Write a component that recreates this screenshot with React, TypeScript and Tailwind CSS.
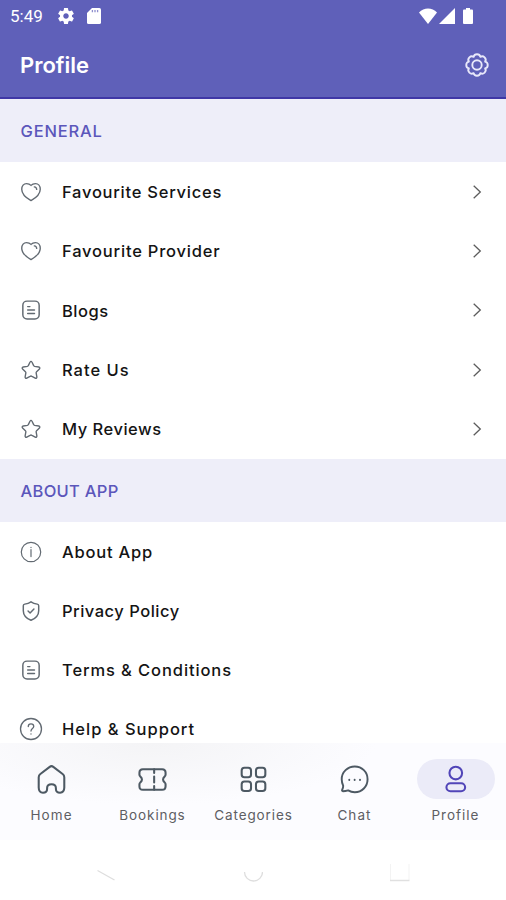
import React from 'react';
import { clsx } from 'clsx';

type IconProps = { className?: string };

interface MenuItem {
  label: string;
  icon: React.FC<IconProps>;
  tracking: string;
}

interface NavItem extends MenuItem {
  active?: boolean;
}

const Stroke: React.FC<IconProps & { width?: number; children: React.ReactNode }> = ({
  className,
  width = 1.4,
  children
}) => (
  <svg
    viewBox="0 0 24 24"
    fill="none"
    stroke="currentColor"
    strokeWidth={width}
    strokeLinecap="round"
    strokeLinejoin="round"
    className={clsx('shrink-0', className)}
  >
    {children}
  </svg>
);

const HeartIcon: React.FC<IconProps> = ({ className }) => (
  <Stroke className={className} width={1.5}>
    <path d="M12 21.3C8.2 19.2 1.9 14.6 1.9 8.9C1.9 5.4 4.1 2.8 7.1 2.8C9.3 2.8 10.9 3.6 12 4.8C13.1 3.6 14.7 2.8 16.9 2.8C19.9 2.8 22.1 5.4 22.1 8.9C22.1 14.6 15.8 19.2 12 21.3Z" />
    <path d="M15.6 6.4C17.1 6.6 18.1 7.6 18.2 9.2" />
  </Stroke>
);

const DocumentIcon: React.FC<IconProps> = ({ className }) => (
  <Stroke className={className} width={1.6}>
    <rect x="3.1" y="2.3" width="17.8" height="19.6" rx="4.6" />
    <path d="M8.4 8.3H10.8M8.4 12.1H15.8M8.4 15.9H15.8" />
  </Stroke>
);

const StarIcon: React.FC<IconProps> = ({ className }) => (
  <Stroke className={className} width={1.5}>
    <path d="M11 3.3C11.4 2.4 12.6 2.4 13 3.3L14.9 7.2C15.1 7.7 15.4 8 15.9 8.1L20.5 8.7C21.6 8.9 22 10 21.2 10.8L18.1 13.8C17.7 14.2 17.5 14.7 17.6 15.2L18.4 19.5C18.6 20.7 17.6 21.4 16.6 20.8L13 18.9C12.4 18.5 11.6 18.5 11 18.9L7.4 20.8C6.4 21.4 5.4 20.7 5.6 19.5L6.4 15.2C6.5 14.7 6.3 14.2 5.9 13.8L2.8 10.8C2 10 2.4 8.9 3.5 8.7L8.1 8.1C8.6 8 8.9 7.7 9.1 7.2Z" />
  </Stroke>
);

const InfoIcon: React.FC<IconProps> = ({ className }) => (
  <Stroke className={className} width={1.3}>
    <circle cx="12" cy="12" r="10.6" />
    <path d="M12 9.4V17M12 6.8V7.2" />
  </Stroke>
);

const ShieldIcon: React.FC<IconProps> = ({ className }) => (
  <Stroke className={className} width={1.6}>
    <path d="M12 2C14.2 3.5 16.7 4.2 18.8 4.5C19.8 4.7 20.4 5.3 20.4 6.3V11.6C20.4 16.8 16.8 20.1 12 22.1C7.2 20.1 3.6 16.8 3.6 11.6V6.3C3.6 5.3 4.2 4.7 5.2 4.5C7.3 4.2 9.8 3.5 12 2Z" />
    <path d="M8.8 12.1L11 14.2L15.2 9.9" />
  </Stroke>
);

const HelpIcon: React.FC<IconProps> = ({ className }) => (
  <Stroke className={clsx(className, 'scale-110')} width={1.3}>
    <circle cx="12" cy="12" r="10.4" />
    <path d="M9.3 9.6C9.3 8 10.4 7 12 7C13.6 7 14.7 8 14.7 9.5C14.7 11.5 12 11.7 12 14M12 16.8V17" />
  </Stroke>
);

const HomeIcon: React.FC<IconProps> = ({ className }) => (
  <Stroke className={className} width={1.5}>
    <path d="M2.7 10.4C2.7 9.4 3.1 8.6 3.9 8L10.7 2.8C11.5 2.2 12.5 2.2 13.3 2.8L20.1 8C20.9 8.6 21.3 9.4 21.3 10.4V17.9C21.3 20.4 20.2 21.6 18.2 21.6C16.2 21.6 15.2 20.6 15.2 18.9V18.1C15.2 16.4 14 15.4 12 15.4C10 15.4 8.8 16.4 8.8 18.1V18.9C8.8 20.6 7.8 21.6 5.8 21.6C3.8 21.6 2.7 20.4 2.7 17.9Z" />
  </Stroke>
);

const TicketIcon: React.FC<IconProps> = ({ className }) => (
  <Stroke className={className} width={1.5}>
    <path d="M5 4.5H19C20.8 4.5 21.5 5.5 21.5 7.1V8.6C21.5 9.2 21.2 9.5 20.8 9.9C19.3 11.1 19.3 12.9 20.8 14.1C21.2 14.5 21.5 14.8 21.5 15.4V16.9C21.5 18.5 20.8 19.5 19 19.5H5C3.2 19.5 2.5 18.5 2.5 16.9V15.4C2.5 14.8 2.8 14.5 3.2 14.1C4.7 12.9 4.7 11.1 3.2 9.9C2.8 9.5 2.5 9.2 2.5 8.6V7.1C2.5 5.5 3.2 4.5 5 4.5Z" />
    <path d="M13.2 4.6V7.3M13.2 9.8V14.2M13.2 16.7V19.4" />
  </Stroke>
);

const GridIcon: React.FC<IconProps> = ({ className }) => (
  <Stroke className={className} width={1.5}>
    <rect x="3.4" y="3.5" width="6.8" height="6.8" rx="2" />
    <rect x="13.8" y="3.5" width="6.8" height="6.8" rx="2" />
    <rect x="3.4" y="13.5" width="6.8" height="6.8" rx="2" />
    <rect x="13.8" y="13.5" width="6.8" height="6.8" rx="2" />
  </Stroke>
);

const ChatIcon: React.FC<IconProps> = ({ className }) => (
  <Stroke className={className} width={1.4}>
    <path d="M12.2 2.5C17.4 2.5 21.5 6.6 21.5 11.8C21.5 17.1 17.4 21.3 12.2 21.3C10.3 21.3 8.8 20.8 7.4 19.9C6 20.3 4.9 20.5 3.6 20.5C3 20.5 2.8 20.1 3 19.6C3.5 18.6 3.8 17.6 3.8 16.6C3.1 15.1 2.7 13.5 2.7 11.8C2.7 6.6 7 2.5 12.2 2.5Z" />
    <path d="M8.2 12.2V12.3M12.1 12.2V12.3M16 12.2V12.3" />
  </Stroke>
);

const UserIcon: React.FC<IconProps> = ({ className }) => (
  <Stroke className={className} width={1.5}>
    <circle cx="12.2" cy="7.3" r="4.6" />
    <rect x="5.4" y="14.7" width="13.6" height="5.9" rx="2.95" />
  </Stroke>
);

const GearIcon: React.FC<IconProps> = ({ className }) => (
  <Stroke className={className} width={1.9}>
    <circle cx="12" cy="12" r="4.7" />
    <path d="M8.63 3.87C9.3 0.4 14.7 0.4 15.37 3.87C18.3 1.9 22.1 5.7 20.13 8.63C23.6 9.3 23.6 14.7 20.13 15.37C22.1 18.3 18.3 22.1 15.37 20.13C14.7 23.6 9.3 23.6 8.63 20.13C5.7 22.1 1.9 18.3 3.87 15.37C0.4 14.7 0.4 9.3 3.87 8.63C1.9 5.7 5.7 1.9 8.63 3.87Z" />
  </Stroke>
);

const general: MenuItem[] = [
  { label: 'Favourite Services', icon: HeartIcon, tracking: 'tracking-[0.75px]' },
  { label: 'Favourite Provider', icon: HeartIcon, tracking: 'tracking-[0.8px]' },
  { label: 'Blogs', icon: DocumentIcon, tracking: 'tracking-[0.5px]' },
  { label: 'Rate Us', icon: StarIcon, tracking: 'tracking-[1px]' },
  { label: 'My Reviews', icon: StarIcon, tracking: 'tracking-[0.5px]' }
];

const about: MenuItem[] = [
  { label: 'About App', icon: InfoIcon, tracking: 'tracking-[0.8px]' },
  { label: 'Privacy Policy', icon: ShieldIcon, tracking: 'tracking-[0.5px]' },
  { label: 'Terms & Conditions', icon: DocumentIcon, tracking: 'tracking-[0.9px]' },
  { label: 'Help & Support', icon: HelpIcon, tracking: 'tracking-[1px]' }
];

const navItems: NavItem[] = [
  { label: 'Home', icon: HomeIcon, tracking: 'tracking-[1.1px]' },
  { label: 'Bookings', icon: TicketIcon, tracking: 'tracking-[0.9px]' },
  { label: 'Categories', icon: GridIcon, tracking: 'tracking-[0.9px]' },
  { label: 'Chat', icon: ChatIcon, tracking: 'tracking-[1.1px]' },
  { label: 'Profile', icon: UserIcon, tracking: 'tracking-[1px]', active: true }
];

const StatusBar = () => (
  <div className="flex h-8 items-center pl-2.5 pr-[33px] text-white">
    <span className="font-[Roboto,sans-serif] text-[17px] leading-8">5:49</span>
    <svg viewBox="0 0 24 24" fill="currentColor" className="ml-[13px] h-5 w-5">
      <path d="M19.14 12.94c.04-.3.06-.61.06-.94 0-.32-.02-.64-.07-.94l2.03-1.58a.49.49 0 0 0 .12-.61l-1.92-3.32a.488.488 0 0 0-.59-.22l-2.39.96c-.5-.38-1.03-.7-1.62-.94l-.36-2.54a.484.484 0 0 0-.48-.41h-3.84c-.24 0-.43.17-.47.41l-.36 2.54c-.59.24-1.13.57-1.62.94l-2.39-.96c-.22-.08-.47 0-.59.22L2.74 8.87c-.12.21-.08.47.12.61l2.03 1.58c-.05.3-.09.63-.09.94s.02.64.07.94l-2.03 1.58a.49.49 0 0 0-.12.61l1.92 3.32c.12.22.37.29.59.22l2.39-.96c.5.38 1.03.7 1.62.94l.36 2.54c.05.24.24.41.48.41h3.84c.24 0 .44-.17.47-.41l.36-2.54c.59-.24 1.13-.56 1.62-.94l2.39.96c.22.08.47 0 .59-.22l1.92-3.32c.12-.22.07-.47-.12-.61l-2.01-1.58zM12 15.3c-1.8 0-3.3-1.5-3.3-3.3s1.5-3.3 3.3-3.3 3.3 1.5 3.3 3.3-1.5 3.3-3.3 3.3z" />
    </svg>
    <svg viewBox="0 0 14 16" fill="currentColor" className="ml-[11px] h-4 w-3.5">
      <path d="M5 0H12.4Q14 0 14 1.6V14.4Q14 16 12.4 16H1.6Q0 16 0 14.4V5Z" />
      <path d="M5.4 2V4.2M8 2V4.2M10.6 2V4.2" stroke="#5f60b9" strokeOpacity="0.7" strokeWidth="1.3" />
    </svg>
    <div className="ml-auto flex items-center">
      <svg viewBox="0 0 18 16" fill="currentColor" className="h-4 w-[18px]">
        <path d="M9 16L0 4.6C5 -1 13 -1 18 4.6Z" />
      </svg>
      <svg viewBox="0 0 16 16" fill="currentColor" className="ml-0.5 h-4 w-4">
        <path d="M16 0V16H0Z" />
      </svg>
      <svg viewBox="0 0 10 16" fill="currentColor" className="ml-2 h-4 w-2.5">
        <path d="M3 0H7V1.5H9Q10 1.5 10 2.7V15Q10 16 9 16H1Q0 16 0 15V2.7Q0 1.5 1 1.5H3Z" />
      </svg>
    </div>
  </div>
);

const SectionTitle: React.FC<{ title: string; className?: string }> = ({ title, className }) => (
  <h2
    className={clsx(
      'flex h-[63px] items-center bg-[#eeeef9] pl-[20.5px] pt-px text-[16.5px] font-medium text-[#5b56bb]',
      className
    )}
  >
    {title}
  </h2>
);

const MenuRow: React.FC<{ item: MenuItem; chevron?: boolean }> = ({ item, chevron }) => {
  const Icon = item.icon;

  return (
    <li className="flex h-[59.2px] items-center pl-5 pr-[23px]">
      <Icon className="h-[22px] w-[22px] text-[#626a72]" />
      <span className={clsx('ml-5 pt-px text-[16.5px] font-medium text-[#141414]', item.tracking)}>
        {item.label}
      </span>
      {chevron && (
        <svg
          viewBox="0 0 12 16"
          fill="none"
          stroke="#5c5c5c"
          strokeWidth="1.3"
          className="ml-auto h-4 w-3"
        >
          <path d="M2.7 1.8L9.3 8L2.7 14.2" />
        </svg>
      )}
    </li>
  );
};

const BottomNav = () => (
  <nav className="flex h-[97px] bg-[#fcfcff] bg-radial-[at_30%_0%] from-[#f4f4f6] to-[#fcfcff] to-45% pt-4 pl-px">
    {navItems.map(({ label, icon: Icon, tracking, active }) => (
      <a key={label} className="flex flex-1 flex-col items-center">
        <span
          className={clsx(
            'flex h-10 w-[78px] items-center justify-center rounded-full',
            active ? 'bg-[#ebebf8] text-[#5145b8]' : 'text-[#4d5963]'
          )}
        >
          <Icon className="h-[33px] w-[33px]" />
        </span>
        <span className={clsx('mt-1.5 text-[13.5px] leading-5 text-[#5e5e63]', tracking)}>
          {label}
        </span>
      </a>
    ))}
  </nav>
);

const SystemNav = () => (
  <div className="flex h-[60px] items-center justify-between bg-white px-24 pt-1.5">
    <svg viewBox="0 0 20 20" fill="none" stroke="#dedede" strokeWidth="1.3" className="h-5 w-5">
      <path d="M1.5 7.5L18.5 17" />
    </svg>
    <svg viewBox="0 0 20 20" fill="none" stroke="#dedede" strokeWidth="1.3" className="h-5 w-5">
      <path d="M1.5 9A9 9 0 0 0 19.5 9" />
    </svg>
    <svg viewBox="0 0 20 20" fill="none" stroke="#e0e0e0" className="h-5 w-5">
      <path d="M0.5 1V17M19 1V17" stroke="#f3f3f3" />
      <path d="M0 17.5H19.5" strokeWidth="1.5" />
    </svg>
  </div>
);

export default function App() {
  return (
    <div className="flex h-[900px] w-[506px] flex-col overflow-hidden bg-white font-[Inter,sans-serif]">
      <header className="h-[99px] shrink-0 border-b-2 border-[#3f37a6] bg-[#5f60b9]">
        <StatusBar />
        <div className="flex h-[66px] items-center justify-between pl-5 pr-[17px] text-white">
          <h1 className="text-[22px] font-semibold">Profile</h1>
          <GearIcon className="h-6 w-6 text-[#e8e8fa]" />
        </div>
      </header>

      <main className="min-h-0 flex-1 overflow-hidden">
        <SectionTitle title="GENERAL" className="tracking-[0.8px]" />
        <ul className="pt-[0.5px] pb-[0.5px]">
          {general.map((item) => (
            <MenuRow key={item.label} item={item} chevron />
          ))}
        </ul>
        <SectionTitle title="ABOUT APP" className="tracking-[0.3px]" />
        <ul>
          {about.map((item) => (
            <MenuRow key={item.label} item={item} />
          ))}
        </ul>
      </main>

      <BottomNav />
      <SystemNav />
    </div>
  );
}
